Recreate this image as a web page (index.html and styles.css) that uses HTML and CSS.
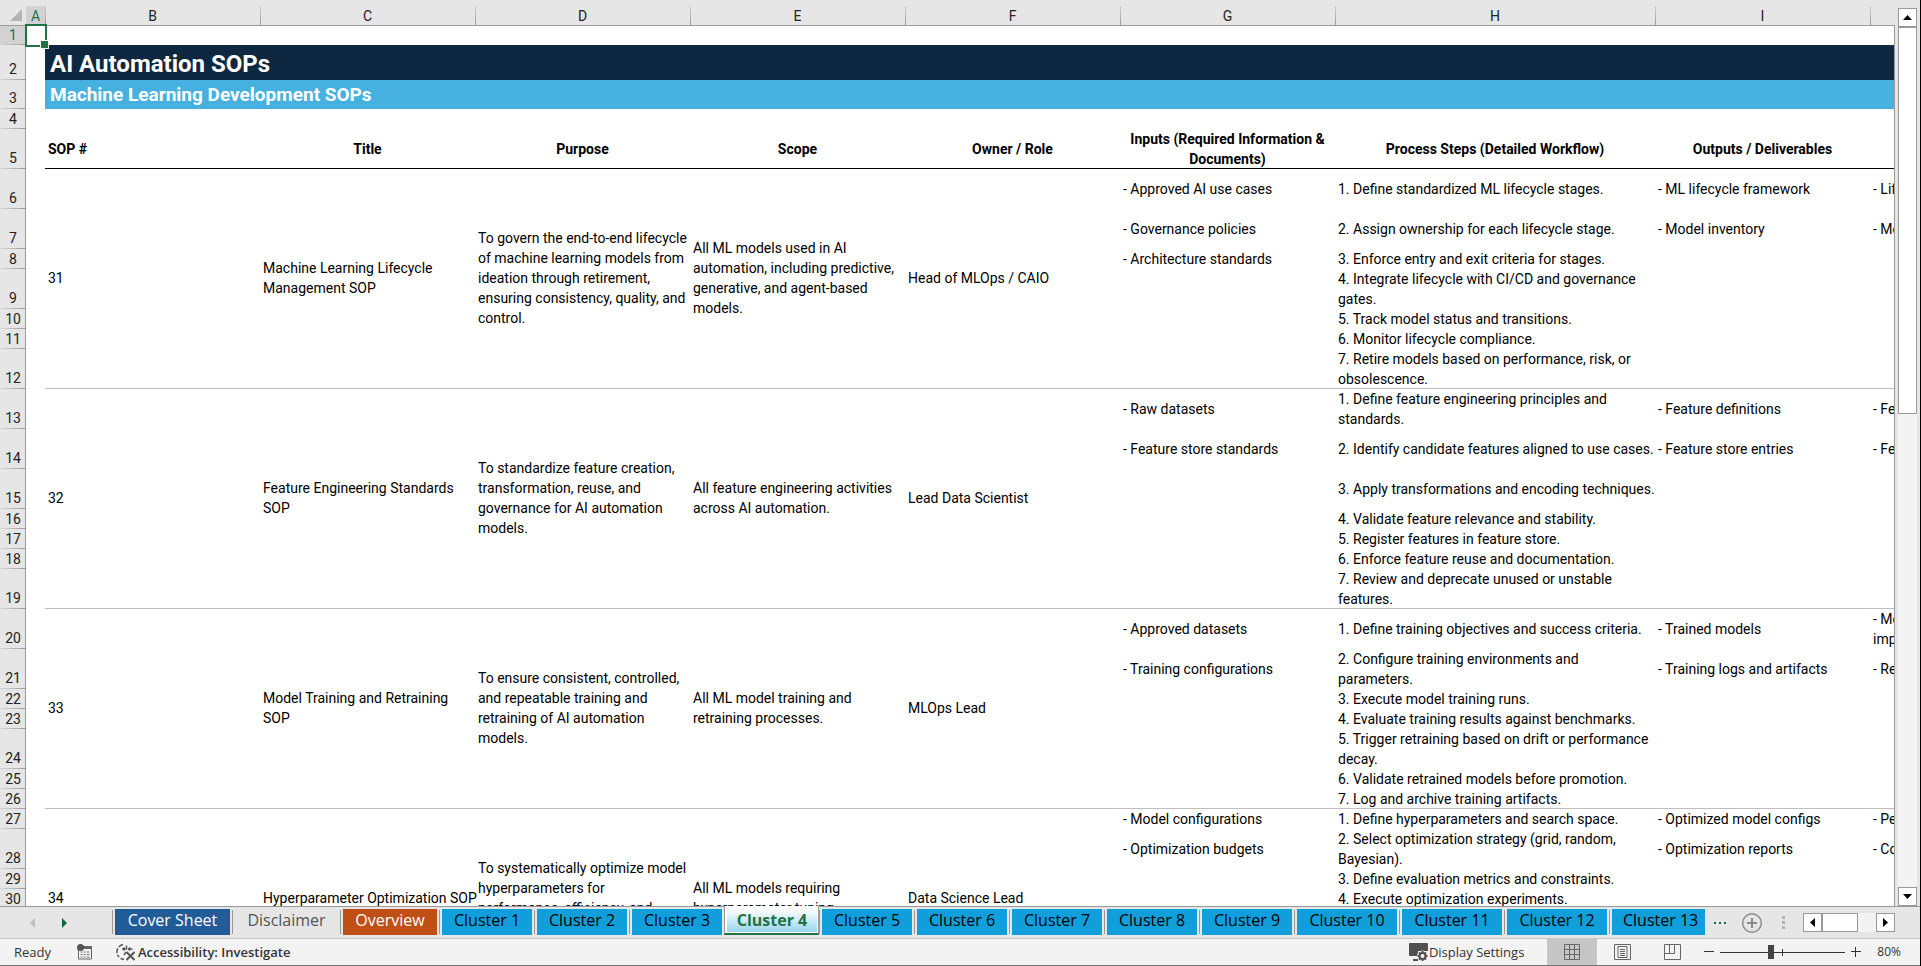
FILE: index.html
```html
<!DOCTYPE html>
<html lang="en">
    <head>
        <meta charset="utf-8">
        <meta name="viewport" content="width=device-width, initial-scale=1">
        <title>AI Automation SOPs</title>
        <link rel="stylesheet" href="styles.css">
    </head>
    <body>
        <main class="workbook">
            <div class="sheet">
                <table class="grid">
                    <colgroup>
                        <col class="col-num">
                        <col class="col-a">
                        <col class="col-std" span="6">
                        <col class="col-h">
                        <col class="col-std" span="2">
                    </colgroup>
                    <thead>
                        <tr class="letters">
                            <th class="corner"><svg width="12" height="12" viewBox="0 0 12 12"><path d="M12 0v12H0z" fill="#b4b4b4"/></svg></th>
                            <th class="picked">A</th>
                            <th>B</th>
                            <th>C</th>
                            <th>D</th>
                            <th>E</th>
                            <th>F</th>
                            <th>G</th>
                            <th>H</th>
                            <th>I</th>
                            <th></th>
                        </tr>
                    </thead>
                    <tbody>
                        <tr class="r-first"><th class="picked">1</th><td class="cursor-cell"><div class="cursor"></div></td><td colspan="9"></td></tr>
                        <tr class="r-title"><th>2</th><td></td><td class="title" colspan="9">AI Automation SOPs</td></tr>
                        <tr class="r-sub"><th>3</th><td></td><td class="subtitle" colspan="9">Machine Learning Development SOPs</td></tr>
                        <tr class="r1"><th>4</th><td></td><td colspan="9"></td></tr>
                        <tr class="r2 heads">
                            <th>5</th><td></td>
                            <td class="left">SOP #</td>
                            <td>Title</td>
                            <td>Purpose</td>
                            <td>Scope</td>
                            <td>Owner / Role</td>
                            <td>Inputs (Required Information &amp;<br>Documents)</td>
                            <td>Process Steps (Detailed Workflow)</td>
                            <td>Outputs / Deliverables</td>
                            <td></td>
                        </tr>

                        <!-- SOP 31 -->
                        <tr class="r2">
                            <th>6</th><td></td>
                            <td class="end" rowspan="7">31</td>
                            <td class="end" rowspan="7">Machine Learning Lifecycle<br>Management SOP</td>
                            <td class="end" rowspan="7">To govern the end-to-end lifecycle<br>of machine learning models from<br>ideation through retirement,<br>ensuring consistency, quality, and<br>control.</td>
                            <td class="end" rowspan="7">All ML models used in AI<br>automation, including predictive,<br>generative, and agent-based<br>models.</td>
                            <td class="end" rowspan="7">Head of MLOps / CAIO</td>
                            <td>- Approved AI use cases</td>
                            <td>1. Define standardized ML lifecycle stages.</td>
                            <td>- ML lifecycle framework</td>
                            <td>- Lifecycle status</td>
                        </tr>
                        <tr class="r2"><th>7</th><td></td><td>- Governance policies</td><td>2. Assign ownership for each lifecycle stage.</td><td>- Model inventory</td><td>- Model compliance</td></tr>
                        <tr class="r1"><th>8</th><td></td><td>- Architecture standards</td><td>3. Enforce entry and exit criteria for stages.</td><td></td><td></td></tr>
                        <tr class="r2"><th>9</th><td></td><td></td><td>4. Integrate lifecycle with CI/CD and governance<br>gates.</td><td></td><td></td></tr>
                        <tr class="r1"><th>10</th><td></td><td></td><td>5. Track model status and transitions.</td><td></td><td></td></tr>
                        <tr class="r1"><th>11</th><td></td><td></td><td>6. Monitor lifecycle compliance.</td><td></td><td></td></tr>
                        <tr class="r2 last"><th>12</th><td></td><td></td><td>7. Retire models based on performance, risk, or<br>obsolescence.</td><td></td><td></td></tr>

                        <!-- SOP 32 -->
                        <tr class="r2">
                            <th>13</th><td></td>
                            <td class="end" rowspan="7">32</td>
                            <td class="end" rowspan="7">Feature Engineering Standards<br>SOP</td>
                            <td class="end" rowspan="7">To standardize feature creation,<br>transformation, reuse, and<br>governance for AI automation<br>models.</td>
                            <td class="end" rowspan="7">All feature engineering activities<br>across AI automation.</td>
                            <td class="end" rowspan="7">Lead Data Scientist</td>
                            <td>- Raw datasets</td>
                            <td>1. Define feature engineering principles and<br>standards.</td>
                            <td>- Feature definitions</td>
                            <td>- Feature reuse</td>
                        </tr>
                        <tr class="r2"><th>14</th><td></td><td>- Feature store standards</td><td>2. Identify candidate features aligned to use cases.</td><td>- Feature store entries</td><td>- Feature quality</td></tr>
                        <tr class="r2"><th>15</th><td></td><td></td><td>3. Apply transformations and encoding techniques.</td><td></td><td></td></tr>
                        <tr class="r1"><th>16</th><td></td><td></td><td>4. Validate feature relevance and stability.</td><td></td><td></td></tr>
                        <tr class="r1"><th>17</th><td></td><td></td><td>5. Register features in feature store.</td><td></td><td></td></tr>
                        <tr class="r1"><th>18</th><td></td><td></td><td>6. Enforce feature reuse and documentation.</td><td></td><td></td></tr>
                        <tr class="r2 last"><th>19</th><td></td><td></td><td>7. Review and deprecate unused or unstable<br>features.</td><td></td><td></td></tr>

                        <!-- SOP 33 -->
                        <tr class="r2">
                            <th>20</th><td></td>
                            <td class="end" rowspan="7">33</td>
                            <td class="end" rowspan="7">Model Training and Retraining<br>SOP</td>
                            <td class="end" rowspan="7">To ensure consistent, controlled,<br>and repeatable training and<br>retraining of AI automation<br>models.</td>
                            <td class="end" rowspan="7">All ML model training and<br>retraining processes.</td>
                            <td class="end" rowspan="7">MLOps Lead</td>
                            <td>- Approved datasets</td>
                            <td>1. Define training objectives and success criteria.</td>
                            <td>- Trained models</td>
                            <td>- Model performance<br>improvement</td>
                        </tr>
                        <tr class="r2"><th>21</th><td></td><td>- Training configurations</td><td>2. Configure training environments and<br>parameters.</td><td>- Training logs and artifacts</td><td>- Retraining frequency</td></tr>
                        <tr class="r1"><th>22</th><td></td><td></td><td>3. Execute model training runs.</td><td></td><td></td></tr>
                        <tr class="r1"><th>23</th><td></td><td></td><td>4. Evaluate training results against benchmarks.</td><td></td><td></td></tr>
                        <tr class="r2"><th>24</th><td></td><td></td><td>5. Trigger retraining based on drift or performance<br>decay.</td><td></td><td></td></tr>
                        <tr class="r1"><th>25</th><td></td><td></td><td>6. Validate retrained models before promotion.</td><td></td><td></td></tr>
                        <tr class="r1 last"><th>26</th><td></td><td></td><td>7. Log and archive training artifacts.</td><td></td><td></td></tr>

                        <!-- SOP 34 -->
                        <tr class="r1">
                            <th>27</th><td></td>
                            <td class="end" rowspan="7">34</td>
                            <td class="end" rowspan="7">Hyperparameter Optimization SOP</td>
                            <td class="end" rowspan="7">To systematically optimize model<br>hyperparameters for<br>performance, efficiency, and<br>stability.</td>
                            <td class="end" rowspan="7">All ML models requiring<br>hyperparameter tuning.</td>
                            <td class="end" rowspan="7">Data Science Lead</td>
                            <td>- Model configurations</td>
                            <td>1. Define hyperparameters and search space.</td>
                            <td>- Optimized model configs</td>
                            <td>- Performance gain</td>
                        </tr>
                        <tr class="r2"><th>28</th><td></td><td>- Optimization budgets</td><td>2. Select optimization strategy (grid, random,<br>Bayesian).</td><td>- Optimization reports</td><td>- Cost efficiency</td></tr>
                        <tr class="r1"><th>29</th><td></td><td></td><td>3. Define evaluation metrics and constraints.</td><td></td><td></td></tr>
                        <tr class="r1"><th>30</th><td></td><td></td><td>4. Execute optimization experiments.</td><td></td><td></td></tr>
                        <tr class="r1"><th></th><td></td><td></td><td></td><td></td><td></td></tr>
                        <tr class="r1"><th></th><td></td><td></td><td></td><td></td><td></td></tr>
                        <tr class="r2 last"><th></th><td></td><td></td><td></td><td></td><td></td></tr>
                    </tbody>
                </table>
            </div>
            <div class="vscroll">
                <button class="scroll-btn" type="button" aria-label="Scroll up"><svg width="9" height="5" viewBox="0 0 9 5"><path d="M4.5 0L9 5H0z"/></svg></button>
                <div class="vtrack"><div class="vthumb"></div></div>
                <button class="scroll-btn" type="button" aria-label="Scroll down"><svg width="9" height="5" viewBox="0 0 9 5"><path d="M0 0h9L4.5 5z"/></svg></button>
            </div>
        </main>

        <nav class="tabbar">
            <div class="tab-nav">
                <button type="button" aria-label="Previous sheet"><svg width="5" height="10" viewBox="0 0 5 10"><path d="M5 0v10L0 5z" fill="#bdbdbd"/></svg></button>
                <button type="button" aria-label="Next sheet"><svg width="5" height="10" viewBox="0 0 5 10"><path d="M0 0v10l5-5z" fill="#0e6b38"/></svg></button>
            </div>
            <div class="tabs">
                <div class="tab cover"><button type="button">Cover Sheet</button></div>
                <div class="tab plain"><button type="button">Disclaimer</button></div>
                <div class="tab overview"><button type="button">Overview</button></div>
                <div class="tab"><button type="button">Cluster 1</button></div>
                <div class="tab"><button type="button">Cluster 2</button></div>
                <div class="tab"><button type="button">Cluster 3</button></div>
                <div class="tab active"><button type="button">Cluster 4</button></div>
                <div class="tab"><button type="button">Cluster 5</button></div>
                <div class="tab"><button type="button">Cluster 6</button></div>
                <div class="tab"><button type="button">Cluster 7</button></div>
                <div class="tab"><button type="button">Cluster 8</button></div>
                <div class="tab"><button type="button">Cluster 9</button></div>
                <div class="tab wide"><button type="button">Cluster 10</button></div>
                <div class="tab wide"><button type="button">Cluster 11</button></div>
                <div class="tab wide"><button type="button">Cluster 12</button></div>
                <div class="tab cut"><button type="button">Cluster 13</button></div>
            </div>
            <div class="tab-tools">
                <button type="button" aria-label="More sheets"><svg width="12" height="2" viewBox="0 0 12 2"><path d="M0 0h2v2H0zM5 0h2v2H5zM10 0h2v2h-2z" fill="#0e6b38"/></svg></button>
                <button class="add" type="button" aria-label="New sheet"><svg width="20" height="20" viewBox="0 0 20 20" fill="none" stroke="#8a8a8a"><circle cx="10" cy="10" r="9.3" stroke-width="1.4"/><path d="M10 5v10M5 10h10" stroke-width="2"/></svg></button>
                <svg class="grip" width="3" height="13" viewBox="0 0 3 13"><path d="M0 0h3v3H0zM0 5h3v3H0zM0 10h3v3H0z" fill="#b4b4b4"/></svg>
                <div class="hscroll">
                    <button class="scroll-btn" type="button" aria-label="Scroll left"><svg width="5" height="9" viewBox="0 0 5 9"><path d="M5 0v9L0 4.5z"/></svg></button>
                    <div class="htrack"><div class="hthumb"></div></div>
                    <button class="scroll-btn" type="button" aria-label="Scroll right"><svg width="5" height="9" viewBox="0 0 5 9"><path d="M0 0v9l5-4.500z"/></svg></button>
                </div>
            </div>
        </nav>

        <footer class="status">
            <span class="ready">Ready</span>
            <button class="macro" type="button" aria-label="Record macro">
                <svg width="15" height="16" viewBox="0 0 15 16"><path d="M1.500 5v10h13V2.500H6" fill="none" stroke="#666"/><path d="M6 2h9v3H6z" fill="#666"/><circle cx="3.500" cy="3.500" r="3.500" fill="#555"/><path d="M3.500 8h2M6.500 8h2M9.500 8h3M3.500 10.500h2M6.500 10.500h2M9.500 10.500h3M3.500 13h2M6.500 13h2M9.500 13h3" stroke="#777"/></svg>
            </button>
            <button class="access" type="button">
                <svg width="19" height="18" viewBox="0 0 19 18" fill="none" stroke="#555"><path d="M7 1.5A7.5 7.5 0 0 0 3 14" stroke-width="1.5" stroke-dasharray="5 1.5"/><path d="M4.500 15.500l3.500 1" stroke-width="1.5"/><path d="M6 6h3M7.500 4.500L9 6 7.500 7.500M16.500 6h-4M14 4.500L12.500 6 14 7.500M10.500 2.500v4M8 12l2-3" stroke-width="1.4"/><path d="M10.500 9l8 8M18.500 9l-8 8" stroke-width="2"/></svg>
                <span>Accessibility: Investigate</span>
            </button>
            <div class="status-right">
                <button class="display" type="button">
                    <svg width="19" height="18" viewBox="0 0 19 18"><path d="M1 0h17a1 1 0 0 1 1 1v7H9v5H1a1 1 0 0 1-1-1V1a1 1 0 0 1 1-1zM4 16h5v2H4z" fill="#505050"/><circle cx="13.5" cy="13" r="5.500" fill="#f3f3f3"/><circle cx="13.5" cy="13" r="3" fill="none" stroke="#505050" stroke-width="2"/><path d="M13.500 8v2M13.500 16v2M8.500 13h2M16.500 13h2M10 9.500l1.400 1.400M15.600 15.100l1.400 1.400M17 9.500l-1.400 1.400M11.400 15.100L10 16.500" stroke="#505050" stroke-width="2"/></svg>
                    <span>Display Settings</span>
                </button>
                <div class="views">
                    <button class="on" type="button" aria-label="Normal view"><svg width="16" height="16" viewBox="0 0 16 16" fill="none" stroke="#666"><path d="M.5.5h15v15H.5zM5.500.5v15M10.500.5v15M.5 5.500h15M.5 10.500h15"/></svg></button>
                    <button type="button" aria-label="Page layout view"><svg width="17" height="16" viewBox="0 0 17 16" fill="none" stroke="#666"><path d="M.5.5h16v15H.5zM4 2.500h9v11H4zM6 5.500h5M6 7.500h5M6 9.500h5M6 11.500h5"/></svg></button>
                    <button type="button" aria-label="Page break view"><svg width="17" height="16" viewBox="0 0 17 16" fill="none" stroke="#666"><path d="M.5.5h16v15H.5zM5.500.5v9M10.500.5v9M.5 9.500h10"/></svg></button>
                </div>
                <div class="zoom">
                    <button type="button" aria-label="Zoom out"><svg width="10" height="10" viewBox="0 0 10 10"><path d="M0 4.500h10" stroke="#333"/></svg></button>
                    <input class="slider" type="range" min="0" max="100" value="40" aria-label="Zoom">
                    <button type="button" aria-label="Zoom in"><svg width="10" height="10" viewBox="0 0 10 10"><path d="M0 4.500h10M4.500 0v10" stroke="#333"/></svg></button>
                    <span class="percent">80%</span>
                </div>
            </div>
        </footer>
    </body>
</html>
```

FILE: styles.css
```css
* {
    box-sizing: border-box;
}
body {
    margin: 0;
    height: 100vh;
    display: flex;
    flex-direction: column;
    overflow: hidden;
    background: #e6e6e6;
    border-right: 1px solid #000;
    font-family: Roboto, "Liberation Sans", sans-serif;
    font-size: 14px;
    color: #000;
}
button {
    margin: 0;
    padding: 0;
    border: 0;
    background: none;
    font: inherit;
    color: inherit;
    display: flex;
    align-items: center;
    justify-content: center;
}
svg {
    display: block;
    flex: none;
}

/* sheet */
.workbook {
    flex: 1;
    min-height: 0;
    display: flex;
}
.sheet {
    flex: 1;
    min-width: 0;
    overflow: hidden;
}
.grid {
    width: 2085px;
    table-layout: fixed;
    border-collapse: separate;
    border-spacing: 0;
    background: #fff;
}
.col-num {
    width: 26px;
}
.col-a {
    width: 19px;
}
.col-std {
    width: 215px;
}
.col-h {
    width: 320px;
}
.grid td {
    padding: 0 3px;
    line-height: 20px;
    white-space: nowrap;
    vertical-align: middle;
}
.grid th {
    padding: 0;
    font-weight: normal;
    line-height: 19px;
    text-align: center;
    color: #222;
    background: #e6e6e6;
}
.letters th {
    height: 26px;
    padding-top: 6px;
    background: linear-gradient(#d0d0d0, #999) 0 6px / 1px 19px no-repeat #e6e6e6;
    box-shadow: inset 0 -1px #999;
}
.letters .corner {
    padding: 4px 0 0 10px;
    background: #e6e6e6;
}
.letters .picked {
    background: linear-gradient(#d2d2d2, #d2d2d2) 0 6px / 100% 20px no-repeat #e6e6e6;
    color: #217346;
}
.grid tbody th {
    vertical-align: bottom;
    background: linear-gradient(90deg, #d8d8d8, #999) 0 100% / 100% 1px no-repeat #e6e6e6;
    box-shadow: inset -1px 0 #999;
}
.grid tbody .picked {
    background-color: #d2d2d2;
    color: #217346;
}
.r-first {
    height: 19px;
}
.r-title {
    height: 35px;
}
.r-sub {
    height: 29px;
}
.r1 {
    height: 20px;
}
.r2 {
    height: 40px;
}
.r2 th,
.r-title th,
.r-sub th {
    padding-bottom: 1px;
}
.grid .title,
.grid .subtitle {
    padding-left: 5px;
    color: #fff;
    font-weight: bold;
}
.grid .title {
    padding-top: 3px;
    background: #0f2841;
    font-size: 24px;
    line-height: 32px;
}
.grid .subtitle {
    background: #46b1e1;
    font-size: 19px;
    line-height: 28px;
}
.heads td {
    font-weight: bold;
    text-align: center;
}
.heads .left {
    text-align: left;
}
.heads td:nth-child(n+3) {
    box-shadow: inset 0 -1px #000;
}
.grid .end,
.last td:nth-child(n+3) {
    box-shadow: inset 0 -1px #bfbfbf;
}
.grid .end {
    padding-bottom: 2px;
}

/* selected cell */
.grid .cursor-cell {
    position: relative;
    padding: 0;
}
.cursor {
    position: absolute;
    top: -2px;
    left: -1px;
    width: 22px;
    height: 23px;
    border: 2px solid #217346;
}
.cursor::after {
    content: "";
    position: absolute;
    right: -4px;
    bottom: -4px;
    width: 7px;
    height: 7px;
    background: #217346;
    border: 1px solid #fff;
}

/* scroll bars */
.scroll-btn {
    width: 19px;
    height: 19px;
    flex: none;
    background: #fff;
    border: 1px solid #999;
}
.vscroll {
    flex: none;
    width: 26px;
    padding: 8px 3px 0 4px;
    display: flex;
    flex-direction: column;
    background: linear-gradient(#999, #999) 0 25px / 1px 100% no-repeat;
}
.vtrack {
    flex: 1;
    background: #f3f3f3;
}
.vthumb {
    height: 45%;
    background: #fff;
    border: 1px solid #999;
}
.hscroll {
    display: flex;
}
.htrack {
    width: 54px;
    background: #f3f3f3;
}
.hthumb {
    width: 36px;
    height: 19px;
    background: #fff;
    border: 1px solid #999;
}

/* sheet tabs */
.tabbar {
    flex: none;
    height: 33px;
    display: flex;
    border-top: 1px solid #999;
    border-bottom: 1px solid #c6c6c6;
    font-family: "Open Sans", "Noto Sans", sans-serif;
    font-size: 16px;
}
.tab-nav {
    width: 112px;
    padding: 0 0 0 30px;
    display: flex;
    gap: 27px;
    flex: none;
}
.tabs {
    display: flex;
    flex: none;
}
.tab {
    position: relative;
    width: 95px;
    height: 28px;
    padding: 2px 2px 0 3px;
    background: linear-gradient(#999, #999) 0 3px / 1px 24px no-repeat;
}
.tab button {
    width: 100%;
    height: 26px;
    padding-bottom: 5px;
    background: #109fda;
    white-space: nowrap;
}
.tab.cover {
    width: 120px;
}
.tab.plain {
    width: 108px;
}
.tab.overview {
    width: 99px;
}
.tab.wide {
    width: 105px;
}
.tab.cut {
    width: 98px;
}
.tab.cut button {
    justify-content: flex-start;
    padding-left: 11px;
}
.tab.cover button {
    background: #215c98;
    color: #fff;
}
.tab.plain button {
    background: none;
    color: #555;
}
.tab.overview button {
    background: #c04f15;
    color: #fff;
}
.tab.active {
    height: 29px;
    margin-top: -1px;
    padding: 3px 1px 0 2px;
    background: #fff;
    border-left: 1px solid #999;
    border-right: 1px solid #999;
    border-bottom: 2px solid #217346;
}
.tab.active button {
    height: 23px;
    padding-bottom: 2px;
    background: linear-gradient(#fff, #98d6ef);
    color: #217346;
    font-weight: bold;
}
.tab-tools {
    margin-left: auto;
    padding-right: 25px;
    display: flex;
    align-items: center;
}
.add {
    margin-left: 16px;
}
.grip {
    margin: 0 18px 0 20px;
}

/* status bar */
.status {
    flex: none;
    height: 27px;
    padding-left: 14px;
    display: flex;
    align-items: center;
    background: #f3f3f3;
    border-bottom: 1px solid #777;
    font-family: "Open Sans", "Noto Sans", sans-serif;
    font-size: 13px;
    line-height: 16px;
    color: #333;
}
.status span {
    padding-bottom: 1px;
}
.ready {
    width: 63px;
}
.access {
    margin-left: 24px;
    font-weight: 600;
}
.access span {
    padding-left: 3px;
}
.status-right {
    margin-left: auto;
    padding-right: 19px;
    height: 100%;
    display: flex;
    align-items: center;
}
.display {
    gap: 1px;
}
.views {
    height: 100%;
    margin-left: 23px;
    display: flex;
}
.views button {
    width: 50px;
}
.views .on {
    background: #c6c6c6;
}
.zoom {
    margin-left: 7px;
    display: flex;
    align-items: center;
}
.slider {
    appearance: none;
    width: 125px;
    height: 14px;
    margin: 0 6px;
    background:
        linear-gradient(#333, #333) 50% 50% / 1px 7px no-repeat,
        linear-gradient(#333, #333) 0 50% / 100% 1px no-repeat;
}
.slider::-webkit-slider-thumb {
    appearance: none;
    width: 6px;
    height: 14px;
    background: #444;
}
.percent {
    margin-left: 16px;
    font-size: 12px;
}
```
